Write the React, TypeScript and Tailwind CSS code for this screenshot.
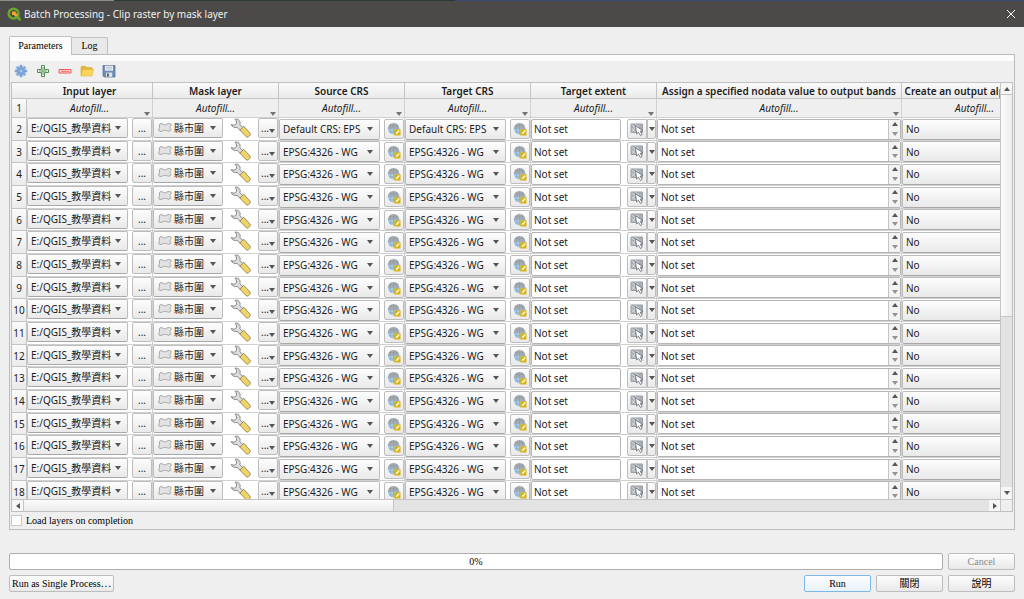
import React from "react";

const SANS = "font-['Noto_Sans','Noto_Sans_CJK_TC',sans-serif]";
const SERIF = "font-['Liberation_Serif','Noto_Sans_CJK_TC',serif]";
const RAISED = "border border-[#bdbdbd] bg-linear-to-b from-[#fdfdfd] to-[#e9e9e9]";

function Arrow({ dir = "down", className = "" }: { dir?: "down" | "up" | "left" | "right"; className?: string }) {
  const d = {
    down: "M0 1h6L3 5z",
    up: "M0 5h6L3 1z",
    left: "M5 0v6L1 3z",
    right: "M1 0v6l4-3z",
  }[dir];
  return (
    <svg viewBox="0 0 6 6" className={`h-1.5 w-1.5 shrink-0 fill-[#555] ${className}`} aria-hidden="true">
      <path d={d} />
    </svg>
  );
}

function QgisLogo() {
  return (
    <svg viewBox="0 0 14 14" className="h-3.5 w-3.5" aria-hidden="true">
      <circle cx="6.600" cy="6.600" r="4.900" fill="none" stroke="#6aa62b" strokeWidth="2.600" />
      <path d="M7.500 7.800l2-2 4.300 5.600v2.100h-2.300z" fill="#6aa62b" />
      <path d="M5 4.600h3.800v1.600l2 2-2 1.900-2-2H5z" fill="#f3a52e" />
    </svg>
  );
}

function GearIcon() {
  return (
    <svg viewBox="0 0 14 14" className="h-3.5 w-3.5" aria-hidden="true">
      <g stroke="#7ba3d6" strokeWidth="2">
        <path d="M7 .8v12.400M.8 7h12.400M2.600 2.600l8.800 8.800M11.400 2.600l-8.800 8.800" />
        <path d="M4.700 1.400l4.600 11.200M9.300 1.400L4.700 12.600M1.400 4.700l11.200 4.600M1.400 9.300l11.200-4.600" strokeWidth=".8" />
      </g>
      <circle cx="7" cy="7" r="4.200" fill="#7ba3d6" />
      <circle cx="7" cy="7" r="1.500" fill="#a9c4e6" />
    </svg>
  );
}

function PlusIcon() {
  return (
    <svg viewBox="0 0 14 14" className="h-3.5 w-3.5" aria-hidden="true">
      <path d="M5.500 1.500h3v4h4v3h-4v4h-3v-4h-4v-3h4z" fill="#f0f7ef" stroke="#4f8f51" />
      <path d="M7 3v8M3 7h8" stroke="#5c9f5c" />
    </svg>
  );
}

function MinusIcon() {
  return (
    <svg viewBox="0 0 14 14" className="h-3.5 w-3.5" aria-hidden="true">
      <path d="M1 5.500h12v3.500H1z" fill="#fbd9d9" stroke="#ee5b5b" />
      <path d="M3 7.300h8" stroke="#ee6b6b" />
    </svg>
  );
}

function FolderIcon() {
  return (
    <svg viewBox="0 0 14 14" className="h-3.5 w-3.5" aria-hidden="true">
      <path d="M1 11.500V3l.8-.8h3.700l1 1.300h5l.8.8V6" fill="#e3b532" stroke="#d6a82c" strokeWidth=".6" />
      <path d="M1 12l1.700-6.500h10.800L12 12z" fill="#fcd757" stroke="#e0b43a" strokeWidth=".6" />
    </svg>
  );
}

function SaveIcon() {
  return (
    <svg viewBox="0 0 14 14" className="h-3.5 w-3.5" aria-hidden="true">
      <path d="M1 1.500h12v11.500H2.200L1 11.800z" fill="#6d8fb8" stroke="#4f6a8c" strokeWidth=".7" />
      <path d="M3 1.700h8v5H3z" fill="#e9eef3" />
      <path d="M4 3.300h6M4 5h6" stroke="#a7b3c0" strokeWidth=".7" />
      <path d="M4 8.600h6.200v4.200H4z" fill="#dfe4ea" />
      <path d="M5 9.500h1.800v3H5z" fill="#43566e" />
    </svg>
  );
}

function PolygonIcon() {
  return (
    <svg viewBox="0 0 15 12" className="h-3 w-3.5 shrink-0" aria-hidden="true">
      <path
        d="M1.500 2.800C2.200.9 3.900.9 5.200 1.900c1.400 1 2.600.9 4 .1C11 .9 13.900.6 14.200 2.600c.2 1.300-1.400 1.700-1.400 2.900 0 1.300 1.200 1.600.8 2.800-.6 1.600-2.800 1.100-4.200.6-2-.7-3.200-.2-4.900.4C2.600 10 .8 9.900.8 8.200c0-1.200.8-1.500.8-2.700z"
        fill="#e2e2e2"
        stroke="#a0a0a0"
      />
    </svg>
  );
}

function WrenchIcon() {
  return (
    <svg viewBox="0 0 21 20" className="h-5 w-[21px]" aria-hidden="true">
      <path
        d="M5 1.200C7.200.6 9.400 1.800 10 3.900c.3 1.100.2 2-.2 2.900l3.400 3-2.700 2.900-3.400-3.300C4.600 10 2 8.900 1.200 6.500L4.100 7.300 6.700 5.600 6.400 3z"
        fill="#dedede"
        stroke="#808080"
        strokeWidth=".9"
      />
      <path d="M9.900 12.100l3.800-3.900 6.400 7c1.200 1.500-2.100 4.900-3.700 3.700z" fill="#efd366" stroke="#877a48" strokeWidth=".8" />
    </svg>
  );
}

function GlobeIcon() {
  return (
    <svg viewBox="0 0 14 14" className="h-3.5 w-3.5" aria-hidden="true">
      <path d="M.8 6.700a5.800 5.800 0 0 1 11.600 0z" fill="#a8acb0" />
      <path d="M.8 6.700a5.800 5.800 0 0 0 11.600 0z" fill="#a5cdee" />
      <path d="M6.600.9v11.600M.8 6.700h11.600M2 3.600h9.200M2 9.800h9.200M4.300 1.500c-1.400 3-1.400 7.400 0 10.400M8.900 1.500c1.400 3 1.400 7.400 0 10.400" fill="none" stroke="#8498a8" strokeWidth=".5" />
      <path d="M7.300 7.300H13.500V13.500H7.300z" fill="#d9b310" />
      <path d="M8.800 12.200l.4-1.600 2.600-2.500 1 1-2.500 2.600z" fill="#fff6c8" />
    </svg>
  );
}

function ExtentIcon() {
  return (
    <svg viewBox="0 0 14 13" className="h-[13px] w-3.5" aria-hidden="true">
      <path d="M1 1h11.500v8.500H1z" fill="#a9afb4" stroke="#9aa0a5" />
      <path d="M1.500 2l5 3.500M1.500 5l4 4M2 8.500L6 4M5 1.500l4 2" stroke="#e9ecee" strokeWidth=".7" />
      <path d="M5.500 2.700l7.300 4.900-2.600.7 2 3.100-1.700 1.100-2-3.200L6.600 11z" fill="#fff" stroke="#60656a" strokeWidth=".8" />
    </svg>
  );
}

type ComboProps = { label: string; value: string; icon?: React.ReactNode; className?: string };

function Combo({ label, value, icon, className = "h-[21px]" }: ComboProps) {
  return (
    <div className={`flex items-center overflow-hidden rounded-xs border-b-[#a8a8a8] ${RAISED} ${className}`}>
      {icon}
      <select aria-label={label} className={`h-full min-w-0 flex-1 appearance-none bg-transparent leading-4 outline-none ${icon ? "pl-0.5" : "pl-[3px]"}`}>
        <option>{value}</option>
      </select>
      <Arrow className="mr-1.5 ml-1" />
    </div>
  );
}

function CrsCell({ label, value }: { label: string; value: string }) {
  return (
    <div className="flex items-center justify-between">
      <Combo label={label} value={value} className="h-[21px] w-[101px]" />
      <button type="button" aria-label={`Select ${label}`} className={`flex h-5 w-5 items-center justify-center rounded-xs ${RAISED}`}>
        <GlobeIcon />
      </button>
    </div>
  );
}

function Autofill() {
  return (
    <button type="button" className="relative block h-full w-full text-center italic">
      Autofill...
      <Arrow className="absolute right-0.5 bottom-0 opacity-80" />
    </button>
  );
}

const COLUMNS = [
  "Input layer",
  "Mask layer",
  "Source CRS",
  "Target CRS",
  "Target extent",
  "Assign a specified nodata value to output bands",
  "Create an output alpha band",
];
const ROWS = Array.from({ length: 17 }, (_, i) => i + 2);
const HEAD = "border-r border-b border-[#c4c4c4] bg-linear-to-b from-[#fafafa] to-[#ebebeb]";
const CELL = "border-r border-b border-[#d0d0d0] p-0";

function BatchTable() {
  return (
    <table className={`w-[1036px] table-fixed border-separate border-spacing-0 text-[10px] leading-[14px] text-[#1c1c1c] ${SANS}`}>
      <colgroup>
        <col className="w-[15px]" />
        <col className="w-[126px]" />
        <col className="w-[126px]" />
        <col className="w-[126px]" />
        <col className="w-[126px]" />
        <col className="w-[126px]" />
        <col className="w-[245px]" />
        <col className="w-[146px]" />
      </colgroup>
      <thead>
        <tr className="h-4">
          <td className={`p-0 ${HEAD} border-r-transparent`} />
          {COLUMNS.map((c) => (
            <th key={c} scope="col" className={`p-0 font-semibold whitespace-nowrap ${HEAD}`}>
              {c}
            </th>
          ))}
        </tr>
      </thead>
      <tbody>
        <tr className="h-[19px] bg-[#efefef]">
          <th scope="row" className={`p-0 font-normal ${HEAD}`}>1</th>
          {COLUMNS.map((c) => (
            <td key={c} className={`h-[19px] ${CELL}`}>
              <Autofill />
            </td>
          ))}
        </tr>
        {ROWS.map((n) => {
          const crs = n === 2 ? "Default CRS: EPS" : "EPSG:4326 - WG";
          return (
            <tr key={n} className="h-[23px] bg-white nth-[3n]:h-[22px]">
              <th scope="row" className={`p-0 text-center font-normal ${HEAD}`}>{n}</th>
              <td className={`align-top ${CELL}`}>
                <div className="flex items-center justify-between">
                  <Combo label={`Input layer ${n}`} value="E:/QGIS_教學資料" className="h-5 w-[101px]" />
                  <button type="button" aria-label="Browse input" className={`h-5 w-5 rounded-xs ${RAISED}`}>...</button>
                </div>
              </td>
              <td className={`align-top ${CELL}`}>
                <div className="flex items-center justify-between">
                  <Combo label={`Mask layer ${n}`} value="縣市圍" className="h-5 w-[70px] pl-1" icon={<PolygonIcon />} />
                  <button type="button" aria-label="Advanced options"><WrenchIcon /></button>
                  <button type="button" aria-label="Browse mask" className={`flex h-5 w-5 items-center justify-center rounded-xs ${RAISED}`}>
                    <span>...</span>
                    <Arrow className="mt-1.5" />
                  </button>
                </div>
              </td>
              <td className={CELL}><CrsCell label={`Source CRS ${n}`} value={crs} /></td>
              <td className={CELL}><CrsCell label={`Target CRS ${n}`} value={crs} /></td>
              <td className={CELL}>
                <div className="flex items-center">
                  <input aria-label={`Target extent ${n}`} defaultValue="Not set" className="h-[21px] w-[90px] rounded-xs border border-[#b5b5b5] bg-white px-0.5" />
                  <button type="button" aria-label="Pick extent" className={`ml-auto flex h-5 w-5 items-center justify-center rounded-l-xs ${RAISED}`}>
                    <ExtentIcon />
                  </button>
                  <button type="button" aria-label="Extent menu" className={`flex h-5 w-[9px] items-center justify-center rounded-r-xs ${RAISED}`}>
                    <Arrow />
                  </button>
                </div>
              </td>
              <td className={CELL}>
                <div className="flex h-[21px] overflow-hidden rounded-xs border border-[#b5b5b5]">
                  <input aria-label={`Nodata value ${n}`} defaultValue="Not set" className="min-w-0 flex-1 bg-white px-[3px]" />
                  <div className="flex w-3 flex-col items-center justify-around border-l border-[#c4c4c4] bg-[#f3f3f3]">
                    <Arrow dir="up" />
                    <Arrow className="opacity-60" />
                  </div>
                </div>
              </td>
              <td className={CELL}><Combo label={`Alpha band ${n}`} value="No" /></td>
            </tr>
          );
        })}
      </tbody>
    </table>
  );
}

const PUSH = `flex h-[17px] items-center justify-center rounded-xs ${RAISED}`;

export default function App() {
  return (
    <div className={`flex h-screen flex-col overflow-hidden bg-[#efefef] text-[10px] leading-4 text-black ${SERIF}`}>
      <div className="flex h-px shrink-0">
        <div className="w-1/9 bg-[#8b8e8b]" />
        <div className="w-1/3 bg-[#2d3b31]" />
        <div className="flex-1 bg-[#3a4878]" />
      </div>
      <header className={`flex h-[26px] shrink-0 items-center bg-[#4b4a48] pr-1.5 pl-[7px] text-[#f1f1f1] ${SANS}`}>
        <QgisLogo />
        <h1 className="ml-[3px] flex-1 text-[10px] font-normal">Batch Processing - Clip raster by mask layer</h1>
        <button type="button" aria-label="Close" className="p-0.5">
          <svg viewBox="0 0 10 10" className="h-2.5 w-2.5"><path d="M1 1l8 8M9 1L1 9" stroke="#fff" /></svg>
        </button>
      </header>

      <main className="flex min-h-0 flex-1 flex-col px-[9px] pt-[9px] pb-[7px]">
        <div role="tablist" className="flex items-end">
          <button type="button" role="tab" aria-selected="true" className="z-10 -mb-px h-[19px] w-[63px] rounded-t-xs border border-b-0 border-[#c0c0c0] bg-[#fcfcfc]">
            Parameters
          </button>
          <button type="button" role="tab" aria-selected="false" className="h-[17px] w-9 rounded-tr-xs border border-b-0 border-l-0 border-[#c0c0c0] bg-[#e9e9e9]">
            Log
          </button>
        </div>

        <section className="flex min-h-0 flex-1 flex-col border border-[#bcbcbc] px-px">
          <div className="-mx-px h-1.5 shrink-0 bg-[#fcfcfc]" />
          <div className="flex h-[21px] shrink-0 items-center gap-2 pb-0.5 pl-[3px]">
            <button type="button" aria-label="Settings"><GearIcon /></button>
            <button type="button" aria-label="Add row"><PlusIcon /></button>
            <button type="button" aria-label="Remove row"><MinusIcon /></button>
            <button type="button" aria-label="Open"><FolderIcon /></button>
            <button type="button" aria-label="Save"><SaveIcon /></button>
          </div>

          <div className="flex min-h-0 flex-1 flex-col border border-[#c0c0c0]">
            <div className="flex min-h-0 flex-1">
              <div className="min-w-0 flex-1 overflow-hidden">
                <BatchTable />
              </div>
              <div className="flex w-3 flex-col border-l border-[#c4c4c4] bg-[#e3e3e3]">
                <div className="flex h-3 items-center justify-center border-b border-[#c4c4c4] bg-[#f6f6f6]"><Arrow dir="up" /></div>
                <div className="h-[222px] border-b border-[#c4c4c4] bg-linear-to-r from-[#fbfbfb] to-[#ececec]" />
                <div className="mt-auto flex h-3 items-center justify-center bg-[#f6f6f6]"><Arrow /></div>
              </div>
            </div>
            <div className="flex h-3 shrink-0 border-t border-[#c4c4c4] bg-[#e3e3e3]">
              <div className="flex w-3 items-center justify-center border-r border-[#c4c4c4] bg-[#f6f6f6]"><Arrow dir="left" /></div>
              <div className="w-[37%] border-r border-[#c4c4c4] bg-linear-to-b from-[#fbfbfb] to-[#ececec]" />
              <div className="ml-auto flex w-[11px] items-center justify-center bg-[#f6f6f6]"><Arrow dir="right" /></div>
              <div className="w-3 border-l border-[#c4c4c4] bg-[#efefef]" />
            </div>
          </div>

          <label className="flex h-[17px] shrink-0 items-center gap-1">
            <input type="checkbox" className="h-[11px] w-[11px] appearance-none border border-[#c8c8c8] bg-white" />
            Load layers on completion
          </label>
        </section>

        <div className="mt-[23px] flex gap-[5px]">
          <div role="progressbar" aria-valuenow={0} className="flex h-[17px] flex-1 items-center justify-center rounded-xs border border-[#adadad] bg-white">
            0%
          </div>
          <button type="button" disabled className={`w-[67px] text-[#8a8a8a] ${PUSH}`}>Cancel</button>
        </div>
        <div className="mt-[5px] flex gap-[5px]">
          <button type="button" className={`mr-auto px-0.5 ${PUSH}`}>Run as Single Process⋯</button>
          <button type="button" className="flex h-[17px] w-[67px] items-center justify-center rounded-xs border border-[#7db8ea] bg-linear-to-b from-[#fdfdfd] to-[#e9f2fa]">Run</button>
          <button type="button" className={`w-[67px] ${PUSH}`}>關閉</button>
          <button type="button" className={`w-[67px] ${PUSH}`}>說明</button>
        </div>
      </main>
    </div>
  );
}
